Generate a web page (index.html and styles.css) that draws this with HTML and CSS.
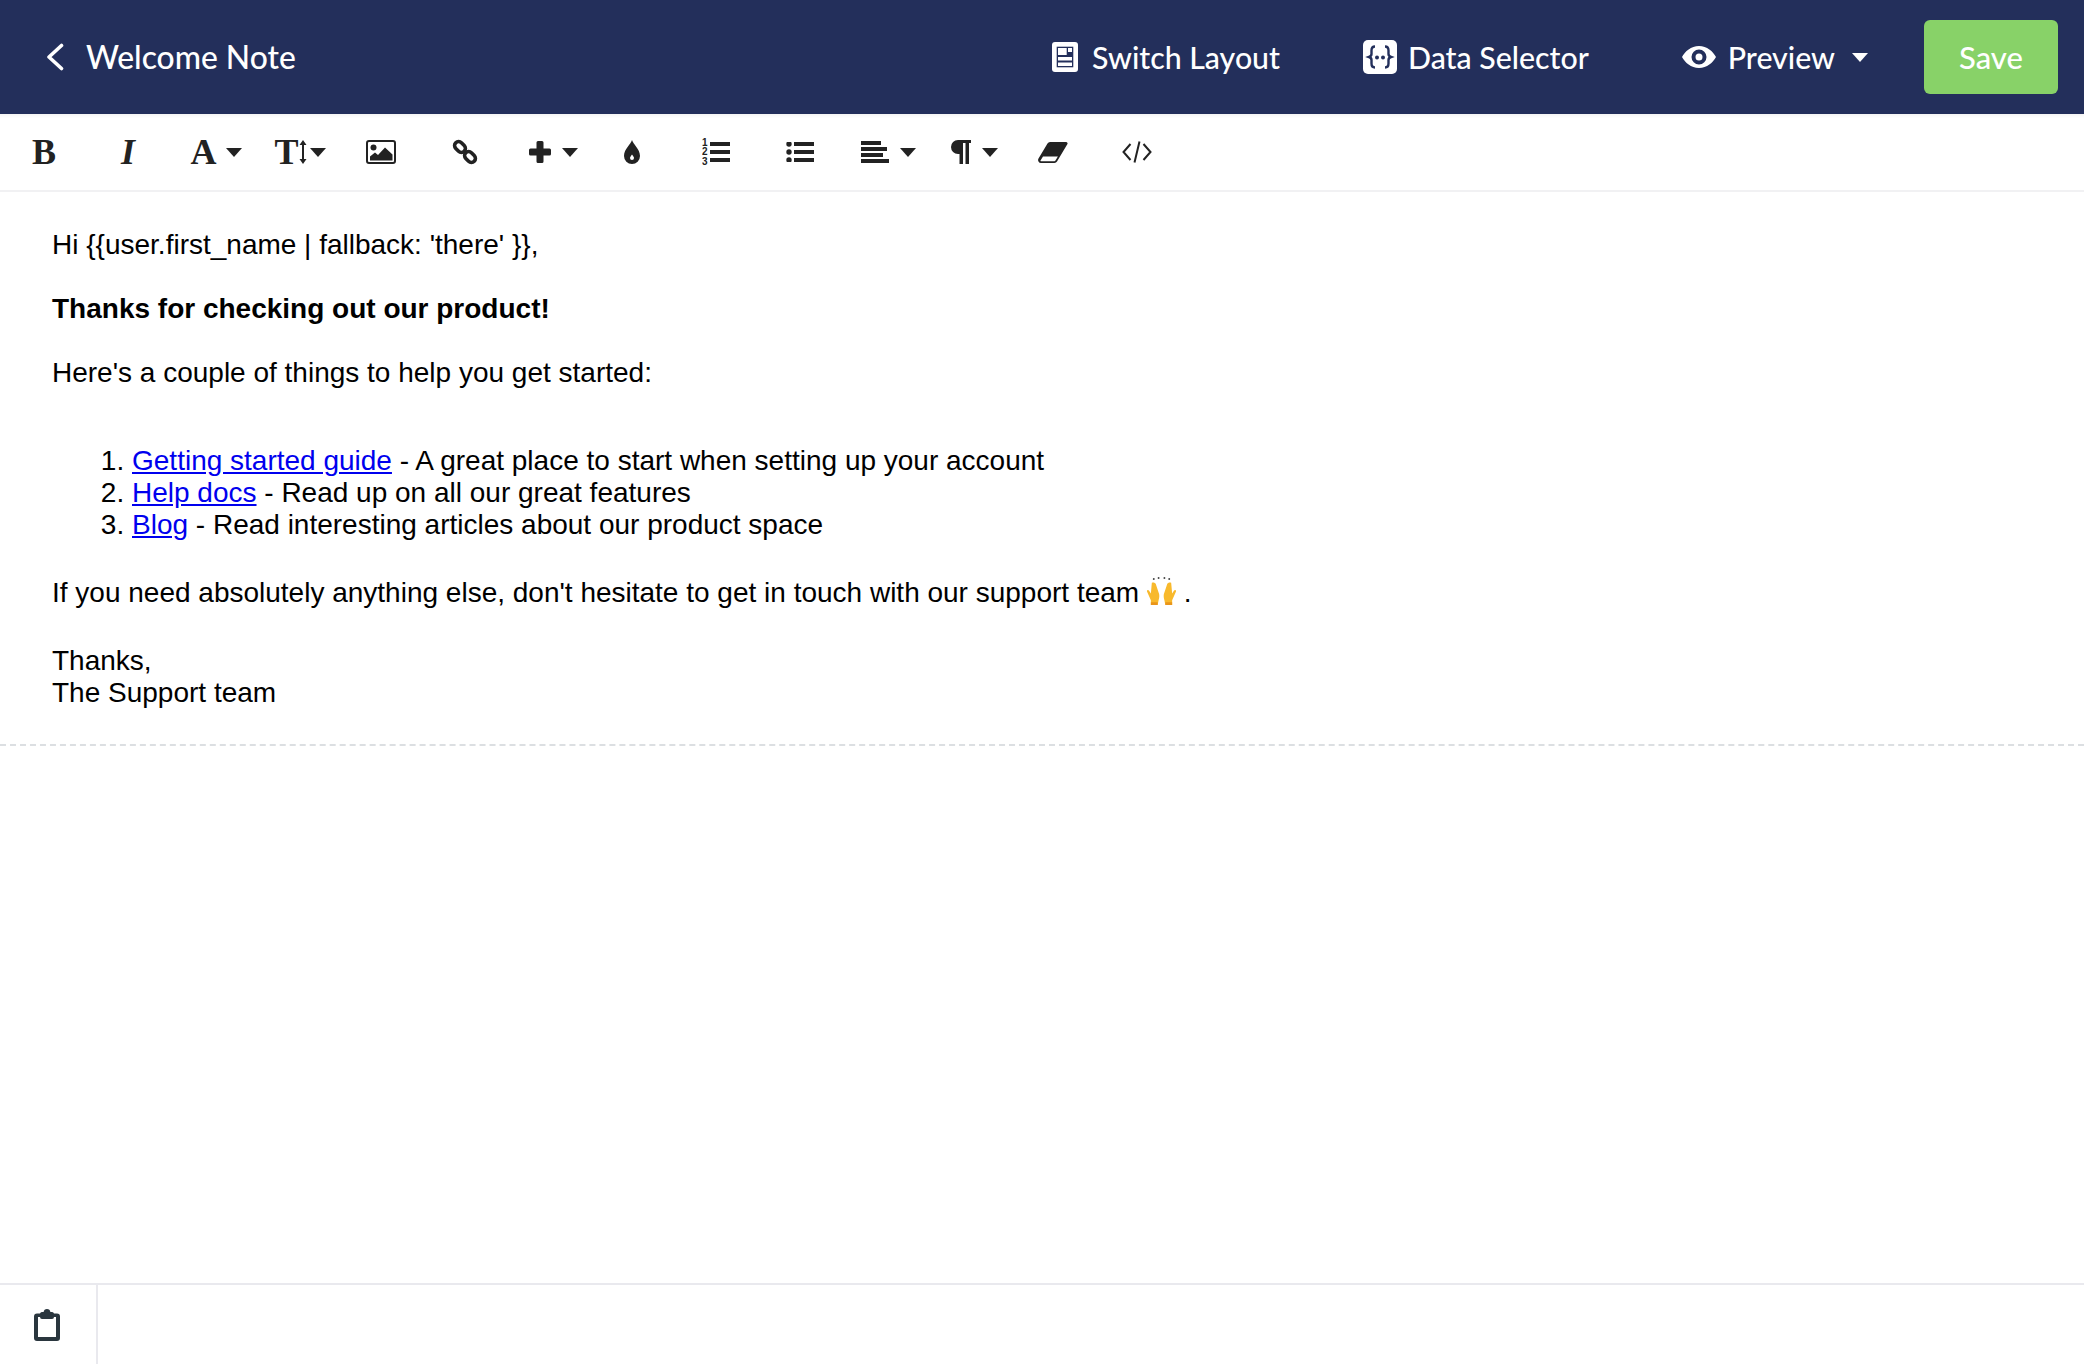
FILE: index.html
```html
<!DOCTYPE html>
<html lang="en">
<head>
<meta charset="utf-8">
<title>Welcome Note</title>
<link rel="stylesheet" href="styles.css">
</head>
<body>
<div class="app">
  <header class="topbar">
    <a class="back">
      <svg class="back-icon" viewBox="0 0 18 28"><path d="M15.500 2.500 3 14l12.500 11.500" fill="none" stroke="#fff" stroke-width="3.600" stroke-linecap="round" stroke-linejoin="round"/></svg>
      <span class="title">Welcome Note</span>
    </a>
    <nav class="actions">
      <a class="action action-layout">
        <svg class="ic-layout" viewBox="0 0 26 30"><rect width="26" height="30" rx="3" fill="#fff"/><rect x="4.700" y="4.700" width="16.600" height="20.600" fill="#232f5b"/><path fill="#fff" d="M6 6h8.700v7H6zM16 6h4v4h-4zM6 15h14v3.500H6zM6 20.500h14V24H6z"/></svg>
        <span>Switch Layout</span>
      </a>
      <a class="action action-data">
        <svg class="ic-data" viewBox="0 0 34 34"><rect width="34" height="34" rx="5" fill="#fff"/><path d="M12 6.500c-3 0-3.500 1.500-3.500 4v3.500c0 1.500-1 2.500-2.500 3 1.500.5 2.500 1.500 2.500 3v3.500c0 2.500.5 4 3.500 4M22 6.500c3 0 3.500 1.500 3.500 4v3.500c0 1.500 1 2.500 2.500 3-1.500.5-2.500 1.500-2.500 3v3.500c0 2.500-.5 4-3.500 4" fill="none" stroke="#232f5b" stroke-width="2.400"/><circle cx="14" cy="17.500" r="2" fill="#232f5b"/><circle cx="20" cy="17.500" r="2" fill="#232f5b"/></svg>
        <span>Data Selector</span>
      </a>
      <a class="action action-preview">
        <svg class="ic-eye" viewBox="0 0 34 24"><path fill="#fff" fill-rule="evenodd" d="M17 1c8 0 14 5.500 17 11-3 5.500-9 11-17 11S3 17.500 0 12C3 6.500 9 1 17 1Zm0 3.500a7.500 7.500 0 1 0 0 15 7.500 7.500 0 0 0 0-15Zm0 4a3.500 3.500 0 1 1 0 7 3.500 3.500 0 0 1 0-7Z"/></svg>
        <span>Preview</span>
        <i class="caret caret-light"></i>
      </a>
      <button class="save">Save</button>
    </nav>
  </header>

  <div class="toolbar">
    <div class="tool"><b class="glyph">B</b></div>
    <div class="tool"><b class="glyph glyph-italic">I</b></div>
    <div class="tool tool-caret"><b class="glyph">A</b><i class="caret"></i></div>
    <div class="tool tool-caret"><b class="glyph glyph-t">T</b><svg class="ic-updown" viewBox="0 0 8 24"><path d="M4 0 7.500 5H5v14h2.500L4 24 .5 19H3V5H.5Z" fill="#222"/></svg><i class="caret caret-t"></i></div>
    <div class="tool"><svg class="ic-image" viewBox="0 0 30 24"><path fill="#222" fill-rule="evenodd" d="M3 0h24a3 3 0 0 1 3 3v18a3 3 0 0 1-3 3H3a3 3 0 0 1-3-3V3a3 3 0 0 1 3-3Zm0 2a1 1 0 0 0-1 1v18a1 1 0 0 0 1 1h24a1 1 0 0 0 1-1V3a1 1 0 0 0-1-1H3Z"/><circle cx="7.500" cy="7.500" r="3" fill="#222"/><path fill="#222" d="M4 20.500v-4l5-4 3 2.500 7-7.500 7.500 7v6Z"/></svg></div>
    <div class="tool"><svg class="ic-link" viewBox="0 0 26 26"><g fill="none" stroke="#222" stroke-width="3.600"><rect x="2" y="4" width="12" height="8" rx="4" transform="rotate(45 8 8)"/><rect x="12" y="14" width="12" height="8" rx="4" transform="rotate(45 18 18)"/></g></svg></div>
    <div class="tool tool-caret"><svg class="ic-plus" viewBox="0 0 22 22"><path d="M7.500 1.500A1.500 1.500 0 0 1 9 0h4a1.500 1.500 0 0 1 1.500 1.500v6h6A1.500 1.500 0 0 1 22 9v4a1.500 1.500 0 0 1-1.500 1.500h-6v6A1.500 1.500 0 0 1 13 22H9a1.500 1.500 0 0 1-1.500-1.500v-6h-6A1.500 1.500 0 0 1 0 13V9a1.500 1.500 0 0 1 1.500-1.500h6Z" fill="#222"/></svg><i class="caret caret-wide"></i></div>
    <div class="tool"><svg class="ic-drop" viewBox="0 0 16 24"><path fill="#222" fill-rule="evenodd" d="M8 0c1 4 8 9 8 16a8 8 0 0 1-16 0C0 9 7 4 8 0Zm0 14.500c-1 1.500-2 2.500-2 3.500a2 2 0 0 0 4 0c0-1-1-2-2-3.500Z"/></svg></div>
    <div class="tool"><svg class="ic-ol" viewBox="0 0 28 28"><path fill="#222" d="M8 4h20v4H8zM8 12h20v4H8zM8 20h20v4H8z"/><text x="0" y="8" class="ol-num">1</text><text x="0" y="17" class="ol-num">2</text><text x="0" y="26.500" class="ol-num">3</text></svg></div>
    <div class="tool"><svg class="ic-ul" viewBox="0 0 28 20"><path fill="#222" d="M8 0h20v4H8zM8 8h20v4H8zM8 16h20v4H8z"/><circle cx="3" cy="2" r="2.700" fill="#222"/><circle cx="3" cy="10" r="2.700" fill="#222"/><circle cx="3" cy="18" r="2.700" fill="#222"/></svg></div>
    <div class="tool tool-caret"><svg class="ic-align" viewBox="0 0 28 22"><path fill="#222" d="M0 0h20v4H0zM0 6h26v4H0zM0 12h22v4H0zM0 18h28v4H0z"/></svg><i class="caret caret-wide"></i></div>
    <div class="tool tool-caret"><svg class="ic-para" viewBox="0 0 21 24"><path fill="#222" d="M8 0h13v3h-2v21h-3.500V3H13v21H9.500V14H8A7 7 0 0 1 8 0Z"/></svg><i class="caret caret-para"></i></div>
    <div class="tool"><svg class="ic-eraser" viewBox="0 0 30 21"><path fill="#222" fill-rule="evenodd" d="M12 0h16a1.500 1.500 0 0 1 1.300 2.300L19 19.500a3 3 0 0 1-2.500 1.500H3a3 3 0 0 1-2.500-4.500L9.500 1.500A3 3 0 0 1 12 0ZM5 14.500l-2.500 4c-.3.500 0 .8.500.8h13.500a1 1 0 0 0 .8-.5l2.600-4.300Z"/></svg></div>
    <div class="tool"><svg class="ic-code" viewBox="0 0 30 22"><path d="M8.500 3 1.500 11l7 8M21.500 3l7 8-7 8M17.500.5l-5 21" fill="none" stroke="#222" stroke-width="2"/></svg></div>
  </div>

  <main class="canvas">
    <article class="note">
      <p>Hi {{user.first_name | fallback: 'there' }},</p>
      <p><strong>Thanks for checking out our product!</strong></p>
      <p>Here's a couple of things to help you get started:</p>
      <ol class="links">
        <li><a href="#">Getting started guide</a> - A great place to start when setting up your account</li>
        <li><a href="#">Help docs</a> - Read up on all our great features</li>
        <li><a href="#">Blog</a> - Read interesting articles about our product space</li>
      </ol>
      <p class="support">If you need absolutely anything else, don't hesitate to get in touch with our support team <svg class="emoji" viewBox="0 0 30 30"><g fill="#444"><circle cx="7" cy="2" r="1"/><circle cx="12" cy="1" r="1"/><circle cx="18" cy="1" r="1"/><circle cx="23" cy="2" r="1"/></g><path fill="#f8b92c" d="M5 6c2-1 3 0 4 1l3 9c1 2 1 5 0 8l-1 5H4v-5L0 15c-.5-2 1.500-2 2-1l2 3Z"/><path fill="#f8b92c" d="M25 6c-2-1-3 0-4 1l-3 9c-1 2-1 5 0 8l1 5h7v-5l4-9c.5-2-1.500-2-2-1l-2 3Z"/><path fill="#e9951a" d="M4 26h7v3H4zM19 26h7v3h-7z"/></svg> .</p>
      <p class="signoff">Thanks,<br>The Support team</p>
    </article>
    <div class="blank"></div>
  </main>

  <footer class="footer">
    <div class="footer-cell">
      <svg class="ic-clip" viewBox="0 0 26 32"><path fill="#2a363e" fill-rule="evenodd" d="M13 0a3.500 3.500 0 0 1 3.400 3H18a2 2 0 0 1 2 1.500h3a3 3 0 0 1 3 3V29a3 3 0 0 1-3 3H3a3 3 0 0 1-3-3V7.500a3 3 0 0 1 3-3h3A2 2 0 0 1 8 3h1.600A3.500 3.500 0 0 1 13 0ZM4 8v20h18V8h-2a2 2 0 0 1-2 2H8a2 2 0 0 1-2-2Z"/></svg>
    </div>
  </footer>
</div>
</body>
</html>
```
FILE: styles.css
```css
* { box-sizing: border-box; }
html, body { margin: 0; height: 100%; background: #fff; }
body { font-family: "Liberation Sans", Arial, sans-serif; color: #000; overflow: hidden; }
svg { display: block; flex: none; }

.app { height: 1364px; display: flex; flex-direction: column; }

/* top bar */
.topbar {
  height: 114px; flex: none; display: flex; align-items: center; justify-content: space-between;
  padding: 0 26px 0 46px; background: #232f5b; color: #fff;
  font-family: Lato, "Open Sans", sans-serif; font-size: 30.3px; font-weight: 500;
}
.back { display: flex; align-items: center; gap: 22px; }
.back-icon { width: 18px; height: 28px; }
.title { font-size: 31.8px; }
.actions { display: flex; align-items: center; }
.action { display: flex; align-items: center; gap: 14px; }
.action-layout { margin-right: 83px; }
.action-data { gap: 11px; margin-right: 93px; }
.action-preview { gap: 12px; margin-right: 56px; }
.ic-layout { width: 26px; height: 30px; }
.ic-data { width: 34px; height: 34px; }
.ic-eye { width: 34px; height: 24px; }
.save {
  width: 134px; height: 74px; border: 0; border-radius: 6px; background: #88d268; color: #fff;
  font: inherit; font-size: 31px; padding: 0;
}
.caret { display: block; width: 0; height: 0; border-left: 8px solid transparent; border-right: 8px solid transparent; border-top: 9px solid #222; }
.caret-light { border-top-color: #fff; margin-left: 5px; }

/* toolbar */
.toolbar {
  height: 78px; flex: none; display: grid; align-items: center; padding: 0 0 0 2px;
  grid-template-columns: 84px 84px 92px 76px 86px 82px 94px 64px 104px 64px 112px 60px 98px 70px;
  border-bottom: 2px solid #f1f1f3; box-shadow: inset 0 5px 4px -4px #eee;
}
.tool { display: flex; align-items: center; justify-content: center; height: 50px; }
.glyph { font: bold 36px/1 "Liberation Serif", serif; color: #222; }
.glyph-italic { font-style: italic; }
.tool-caret .caret { margin-left: 9px; }
.tool-caret .caret-t { margin-left: 3px; }
.tool-caret .caret-wide { margin-left: 11px; }
.tool-caret .caret-para { margin-left: 11px; }
.ic-updown { width: 8px; height: 24px; }
.ic-image { width: 30px; height: 24px; }
.ic-link { width: 26px; height: 26px; }
.ic-plus { width: 22px; height: 22px; }
.ic-drop { width: 16px; height: 24px; }
.ic-ol { width: 28px; height: 28px; }
.ol-num { font: bold 10px "Liberation Sans", sans-serif; fill: #222; }
.ic-ul { width: 28px; height: 20px; }
.ic-align { width: 28px; height: 22px; }
.ic-para { width: 21px; height: 24px; }
.ic-eraser { width: 30px; height: 21px; }
.ic-code { width: 30px; height: 22px; }

/* editor */
.canvas { flex: 1; display: flex; flex-direction: column; }
.note {
  padding: 37px 52px 35px; font-size: 28px; line-height: 32px;
  border-bottom: 2px dashed #dcdfe2;
}
.note p { margin: 0 0 32px; }
.note a { color: #00e; text-decoration: underline; }
.links { margin: 56px 0 36px; padding-left: 80px; }
.note .support { margin-bottom: 36px; display: block; }
.note .signoff { margin: 0; }
.emoji { display: inline-block; width: 29px; height: 29px; vertical-align: -4px; }
.blank { flex: 1; }

/* footer */
.footer { height: 81px; flex: none; border-top: 2px solid #e9e9ee; display: flex; }
.footer-cell { width: 98px; border-right: 2px solid #e9e9ee; display: flex; justify-content: center; align-items: center; padding: 0 2px 0 0; }
.ic-clip { width: 26px; height: 32px; }
```
